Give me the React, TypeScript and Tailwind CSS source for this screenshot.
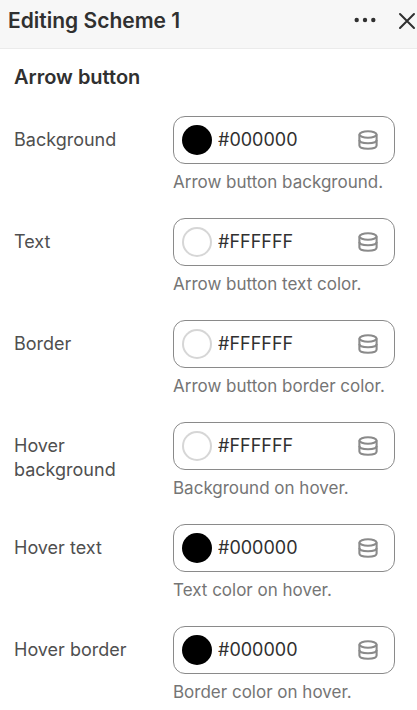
import { useState } from "react"

interface ColorSetting {
  id: string
  label: string
  help: string
  value: string
}

const SETTINGS: ColorSetting[] = [
  { id: "background", label: "Background", help: "Arrow button background.", value: "#000000" },
  { id: "text", label: "Text", help: "Arrow button text color.", value: "#FFFFFF" },
  { id: "border", label: "Border", help: "Arrow button border color.", value: "#FFFFFF" },
  { id: "hover-background", label: "Hover background", help: "Background on hover.", value: "#FFFFFF" },
  { id: "hover-text", label: "Hover text", help: "Text color on hover.", value: "#000000" },
  { id: "hover-border", label: "Hover border", help: "Border color on hover.", value: "#000000" },
]

function DotsIcon() {
  return (
    <svg viewBox="0 0 24 24" className="w-6 h-6" fill="currentColor" aria-hidden="true">
      <circle cx="3.7" cy="11" r="2.2" />
      <circle cx="12" cy="11" r="2.2" />
      <circle cx="20.3" cy="11" r="2.2" />
    </svg>
  )
}

function CloseIcon() {
  return (
    <svg viewBox="0 0 18 18" className="w-[18px] h-[18px]" fill="none" stroke="currentColor" strokeWidth="2" strokeLinecap="round" aria-hidden="true">
      <path d="M2 2l14 14M16 2L2 16" />
    </svg>
  )
}

function SourceIcon() {
  return (
    <svg viewBox="0 0 20 20" className="w-5 h-5" fill="none" stroke="currentColor" strokeWidth="2.1" aria-hidden="true">
      <ellipse cx="10" cy="4.5" rx="8.6" ry="3.2" />
      <path d="M1.4 4.5v11c0 1.9 3.6 3.2 8.6 3.2s8.6-1.3 8.6-3.2v-11" />
      <path d="M1.4 10c0 1.9 3.6 3.2 8.6 3.2s8.6-1.3 8.6-3.2" />
    </svg>
  )
}

function ColorField({ setting }: { setting: ColorSetting }) {
  const [value, setValue] = useState(setting.value)

  return (
    <div className="flex items-start">
      <label htmlFor={setting.id} className="w-[159px] shrink-0 pt-3 pr-8 text-lg leading-6 text-[#4f4f4f]">
        {setting.label}
      </label>
      <div className="flex-1 min-w-0">
        <div className="flex items-center h-12 pl-2 pr-4 rounded-xl border border-[#8a8a8a] bg-white">
          <button
            type="button"
            aria-label={`Pick ${setting.label} color`}
            className="w-[30px] h-[30px] shrink-0 rounded-full border-2 border-black/16"
            style={{ backgroundColor: value }}
          />
          <input
            id={setting.id}
            type="text"
            value={value}
            onChange={(e) => setValue(e.target.value)}
            aria-describedby={`${setting.id}-help`}
            className="flex-1 min-w-0 pl-1.5 text-lg leading-6 text-[#303030] outline-none"
          />
          <button type="button" aria-label="Connect dynamic source" className="shrink-0 text-[#8a8a8a]">
            <SourceIcon />
          </button>
        </div>
        <p id={`${setting.id}-help`} className="mt-1.5 text-[17px] leading-6 text-[#757575] whitespace-nowrap">
          {setting.help}
        </p>
      </div>
    </div>
  )
}

export default function App() {
  return (
    <div className="min-h-screen bg-white font-['Inter',sans-serif] text-[#303030]">
      <header className="flex items-center justify-between pl-2 pr-px pt-[5px] pb-[11px] bg-[#f7f7f7] border-b border-[#ebebeb]">
        <h1 className="text-[21px] leading-8 font-semibold">Editing Scheme 1</h1>
        <div className="flex items-center gap-[21px]">
          <button type="button" aria-label="More actions">
            <DotsIcon />
          </button>
          <button type="button" aria-label="Close">
            <CloseIcon />
          </button>
        </div>
      </header>

      <main className="pl-3.5 pr-[22px] pt-4">
        <h2 className="text-xl leading-6 font-semibold">Arrow button</h2>
        <div className="flex flex-col gap-6 mt-[27px]">
          {SETTINGS.map((setting) => (
            <ColorField key={setting.id} setting={setting} />
          ))}
        </div>
      </main>
    </div>
  )
}
